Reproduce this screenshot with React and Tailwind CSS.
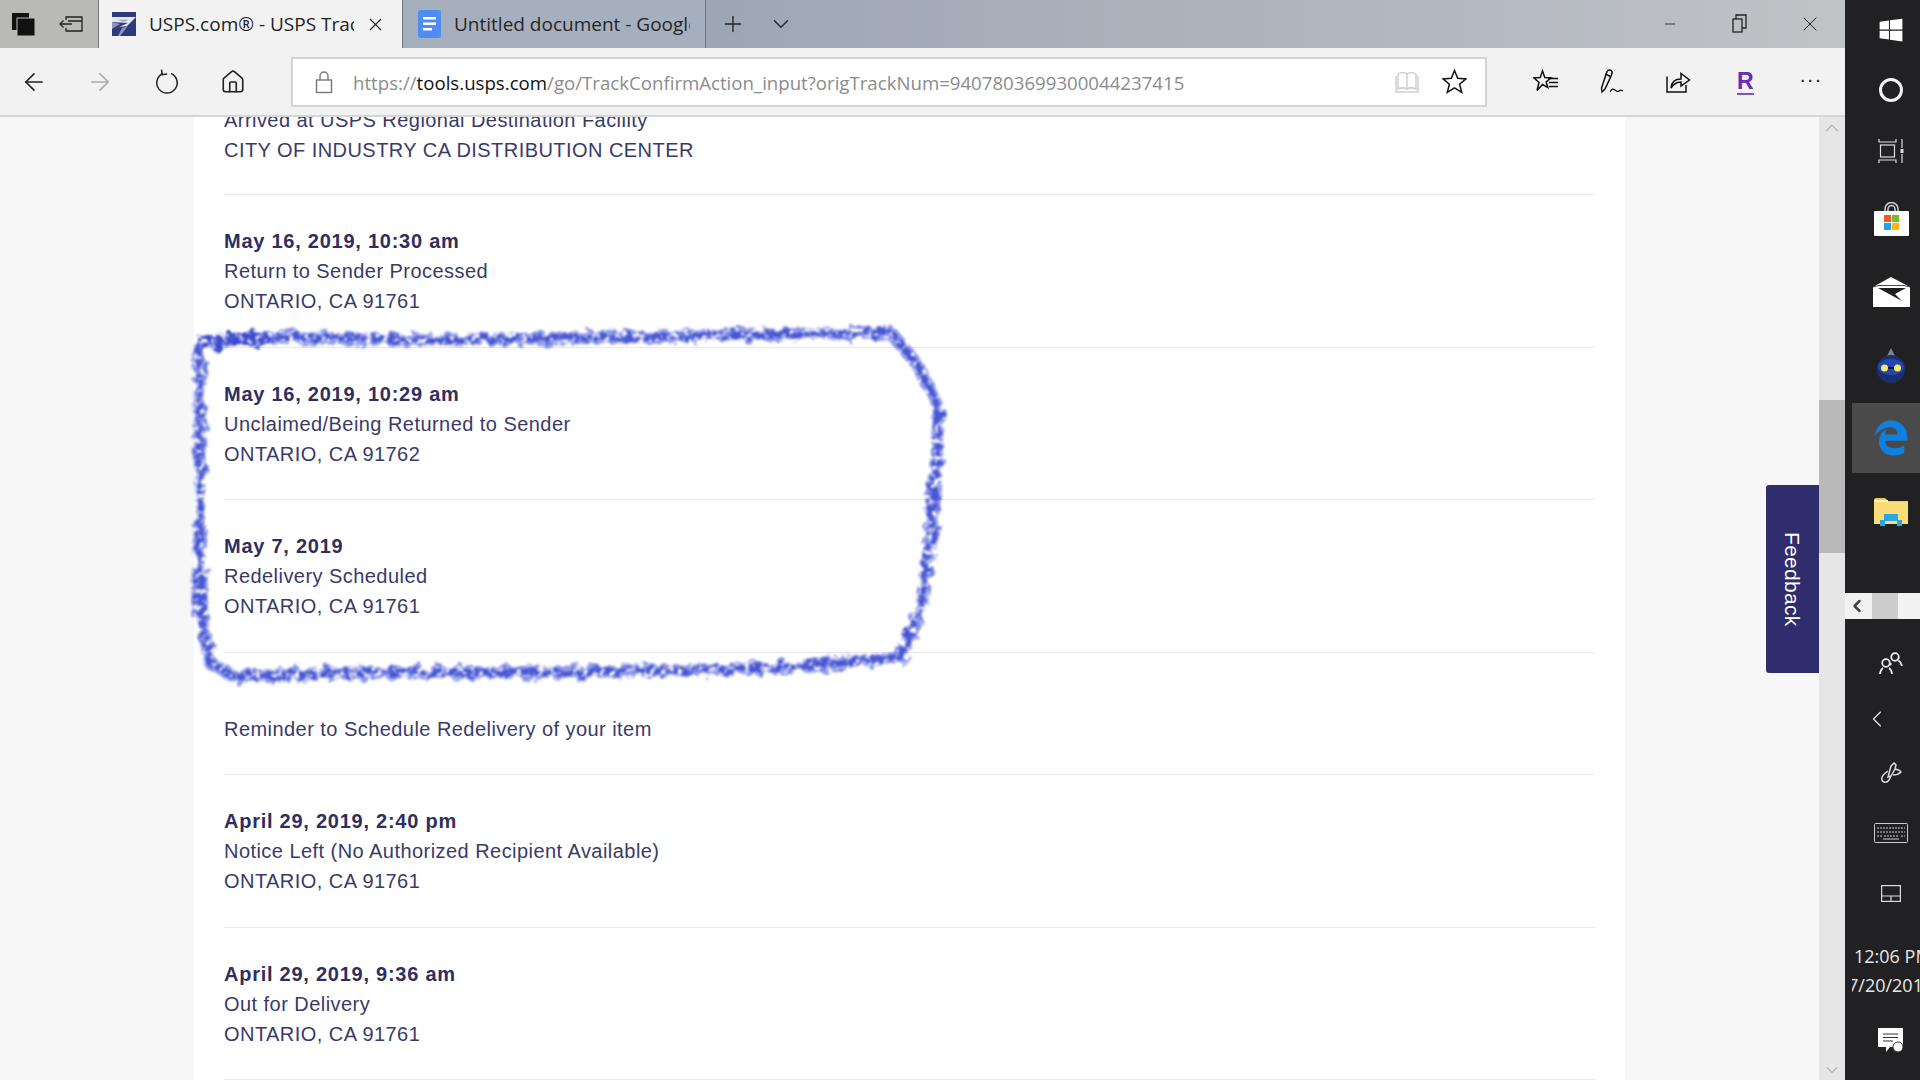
import React from 'react';
import { ArrowLeft, ArrowRight, House, X, Plus, ChevronDown, ChevronUp, ChevronLeft, Minus } from 'lucide-react';
import { FaWindows } from 'react-icons/fa';
import { FaEdgeLegacy } from 'react-icons/fa6';

const events = [
  { lines: ['Arrived at USPS Regional Destination Facility', 'CITY OF INDUSTRY CA DISTRIBUTION CENTER'], clipped: true },
  { date: 'May 16, 2019, 10:30 am', lines: ['Return to Sender Processed', 'ONTARIO, CA 91761'] },
  { date: 'May 16, 2019, 10:29 am', lines: ['Unclaimed/Being Returned to Sender', 'ONTARIO, CA 91762'] },
  { date: 'May 7, 2019', lines: ['Redelivery Scheduled', 'ONTARIO, CA 91761'] },
  { date: '', lines: ['Reminder to Schedule Redelivery of your item'] },
  { date: 'April 29, 2019, 2:40 pm', lines: ['Notice Left (No Authorized Recipient Available)', 'ONTARIO, CA 91761'] },
  { date: 'April 29, 2019, 9:36 am', lines: ['Out for Delivery', 'ONTARIO, CA 91761'] },
];

const Row = ({ event }) => (
  <div className={`border-b border-[#e9e9ec] ${event.clipped ? 'pb-[29px]' : 'pb-[30.500px] pt-[31px]'}`}>
    {!event.clipped && <div className="h-[30px] font-bold tracking-[0.750px] text-[#2f2f5f]">{event.date}</div>}
    {event.lines.map((line) => (
      <div key={line} className="h-[30px]">{line}</div>
    ))}
  </div>
);

const UspsLogo = () => (
  <svg width="24" height="24" viewBox="0 0 24 24">
    <rect width="24" height="24" fill="#2f3a78" />
    <path d="M0 5h24l-9 9-8 1 9-4-16-1z" fill="#e4e7f0" />
    <path d="M0 10l8 2-8 5zM16 14l-8 10h-2l4-8z" fill="#8d96ba" />
    <path d="M5 7.500h12l-5 3z" fill="#aeb5cf" />
  </svg>
);

const DocsIcon = () => (
  <svg width="23" height="28" viewBox="0 0 23 28">
    <rect width="23" height="28" rx="3" fill="#4d8df2" />
    <rect x="5" y="7" width="13" height="2.500" fill="#fff" />
    <rect x="5" y="12.500" width="13" height="2.500" fill="#fff" />
    <rect x="5" y="18" width="9" height="2.500" fill="#fff" />
  </svg>
);

const Refresh = () => (
  <svg width="26" height="28" viewBox="0 0 26 28" fill="none" stroke="#222" strokeWidth="1.500">
    <path d="M9 5.500a10.200 10.200 0 1 0 8 0" />
    <path d="M8 1.500v5h5" transform="rotate(-8 9 5)" />
  </svg>
);

const Lock = () => (
  <svg width="18" height="24" viewBox="0 0 18 24" fill="none" stroke="#777" strokeWidth="1.400">
    <rect x="1.500" y="10" width="15" height="12.500" />
    <path d="M5 10V6a4 4 0 0 1 8 0v4" />
  </svg>
);

const ReadingView = () => (
  <svg width="24" height="24" viewBox="0 0 24 24" fill="none" stroke="#cfcfcf" strokeWidth="1.500">
    <path d="M3 4c3-2 6-2 9 0 3-2 6-2 9 0v15c-3-1.500-6-1.500-9 0-3-1.500-6-1.500-9 0z" />
    <path d="M12 4v15M1 6v16h22V6" />
  </svg>
);

const StarIcon = () => (
  <svg width="25" height="25" viewBox="0 0 25 25" fill="none" stroke="#111" strokeWidth="1.500" strokeLinejoin="miter">
    <path d="M12.500 1.500l3.200 7.800 8.300.6-6.400 5.300 2.100 8.100-7.200-4.400-7.200 4.400 2.100-8.100L1 9.900l8.300-.6z" />
  </svg>
);

const FavList = () => (
  <svg width="26" height="26" viewBox="0 0 26 26" fill="none" stroke="#111" strokeWidth="1.500">
    <path d="M9.500 2l2.300 6.500 6.200.3-4.800 4.200 1.600 5.500L9.500 15.500 4 21.500l2-8L1 8.800l6.200-.3z" />
    <path d="M15 9.500h10M16 13.500h9M16 17.500h9" />
  </svg>
);

const PenIcon = () => (
  <svg width="26" height="28" viewBox="0 0 26 28" fill="none" stroke="#111" strokeWidth="1.500">
    <path d="M8 3.500c1-2 4-2 5 0 .5 1 0 2-.5 3.500L6 21l-3 3-.5-4z" />
    <path d="M6.500 6l5 2.500" />
    <path d="M11 24c2-3.500 3-3.500 5-2s3 2 4 1 2.500-1 4 0" strokeWidth="1.200" />
  </svg>
);

const ShareIcon = () => (
  <svg width="26" height="26" viewBox="0 0 26 26" fill="none" stroke="#111" strokeWidth="1.500">
    <path d="M2 7.500V23h19v-7" />
    <path d="M6 19c.5-6 4.500-9 10-9V4.500l8.500 6.500-8.500 6v-4c-4 0-7 1.500-10 6z" />
  </svg>
);

const RestoreIcon = () => (
  <svg width="16" height="20" viewBox="0 0 16 20" fill="none" stroke="#222" strokeWidth="1.300">
    <rect x="1" y="5" width="9" height="13" />
    <path d="M4 5V1h10v13h-4" />
  </svg>
);

const Cortana = () => (
  <div className="h-[24px] w-[24px] rounded-full border-[3px] border-[#f2f2f2]" />
);

const TaskView = () => (
  <svg width="26" height="26" viewBox="0 0 26 26" fill="none" stroke="#ddd" strokeWidth="1.200">
    <path d="M1 1v3h17V1M1 25v-3h17v3" />
    <rect x="2.500" y="7" width="14" height="12" />
    <path d="M24 1v9M24 16v9" />
    <rect x="22.500" y="11" width="3" height="4" fill="#ddd" stroke="none" />
  </svg>
);

const StoreIcon = () => (
  <svg width="35" height="34" viewBox="0 0 35 34">
    <path d="M11 9V7a6.500 6.500 0 0 1 13 0v2M14 9V7a3.500 3.500 0 0 1 7 0v2" fill="none" stroke="#cfcfcf" strokeWidth="1.500" />
    <rect y="9" width="35" height="25" rx="1" fill="#fff" />
    <rect x="10" y="13" width="7" height="7" fill="#ef5a28" />
    <rect x="18" y="13" width="7" height="7" fill="#7cb927" />
    <rect x="10" y="21" width="7" height="7" fill="#1ca5e8" />
    <rect x="18" y="21" width="7" height="7" fill="#fbb713" />
  </svg>
);

const MailIcon = () => (
  <svg width="37" height="30" viewBox="0 0 37 30">
    <path d="M0 10L18 0l19 10v20H0z" fill="#fff" />
    <path d="M5 11h28l-11 6 7 7z" fill="#1f1f22" />
    <path d="M0 10l6-1.500h25l6 1.500" fill="none" stroke="#1f1f22" strokeWidth="0.800" />
  </svg>
);

const BotIcon = () => (
  <svg width="30" height="36" viewBox="0 0 30 36">
    <path d="M15 0l6 12H9z" fill="#7d8794" />
    <circle cx="15" cy="21" r="14" fill="#1a2f70" />
    <ellipse cx="15" cy="19" rx="13" ry="8" fill="#2447b0" />
    <circle cx="8.500" cy="20" r="3.500" fill="#f4ee6a" />
    <circle cx="21.500" cy="20" r="3.500" fill="#f4ee6a" />
    <path d="M12 20h6" stroke="#10183c" strokeWidth="2" />
  </svg>
);

const FolderIcon = () => (
  <svg width="34" height="28" viewBox="0 0 34 28">
    <path d="M0 2a2 2 0 0 1 2-2h9l3 3h20v4H0z" fill="#f2c94c" />
    <rect y="4" width="34" height="22" fill="#fbdd78" />
    <rect x="0" y="2" width="14" height="2" fill="#fff2b8" />
    <path d="M6 28v-6h4v-4h14v4h4v6h-5v-5H11v5z" fill="#2aa7e0" />
    <rect x="10" y="16" width="14" height="3" fill="#2aa7e0" />
  </svg>
);

const PeopleIcon = () => (
  <svg width="24" height="24" viewBox="0 0 24 24" fill="none" stroke="#eee" strokeWidth="1.800">
    <circle cx="16" cy="5" r="3.800" />
    <path d="M12.500 11.500c-1 .5-1 1-1.500 1.500M19.500 8.500c1.500 1 3 3 3.500 5.500" />
    <circle cx="7" cy="11" r="3.800" />
    <path d="M1 22c.3-3 1.500-5 3-6M10 16c1.500 1 2.700 3 3 6" />
  </svg>
);

const PenSide = () => (
  <svg width="22" height="22" viewBox="0 0 22 22" fill="none" stroke="#ddd" strokeWidth="1.500">
    <path d="M11 4l3-3 2 2-1 4-4 7-3 1z" />
    <path d="M8 9c-3 2-7 6-6 9s5 3 7 0l2-4" />
    <path d="M15 7c3 1 5 1 6 3-2 2-5 3-8 3" />
  </svg>
);

const KeyboardIcon = () => (
  <svg width="34" height="20" viewBox="0 0 34 20" fill="none" stroke="#ccc">
    <rect x="0.500" y="0.500" width="33" height="19" rx="1" />
    <path d="M3 5h28M3 9h28M3 13h5M10 13h15M27 13h4" strokeDasharray="2 1" />
    <path d="M9 16h16" />
  </svg>
);

const TouchpadIcon = () => (
  <svg width="20" height="17" viewBox="0 0 20 17" fill="none" stroke="#ddd" strokeWidth="1.200">
    <rect x="0.600" y="0.600" width="18.800" height="15.800" />
    <path d="M0.600 11h18.800M10 11v5.400" />
  </svg>
);

const NotifIcon = () => (
  <svg width="26" height="26" viewBox="0 0 26 26">
    <path d="M0 1h25v19H12l-4 5v-5H0z" fill="#fff" />
    <path d="M5 7h15M5 10.500h15M5 14h10" stroke="#333" strokeWidth="1.200" />
    <circle cx="20" cy="20" r="5" fill="#fff" stroke="#333" />
  </svg>
);

const outline =
  'M200 345L255 337L429 340L628 337L891 333L916 363L939 407L936 470L931 530L921 610L901 657L777 668L578 672L329 673L235 677L210 663L200 610L200 477Z';

const Scribble = () => (
  <svg className="absolute inset-0 pointer-events-none" width="1920" height="1080" viewBox="0 0 1920 1080" fill="none">
    <defs>
      <filter id="rough" x="-5%" y="-5%" width="110%" height="110%">
        <feTurbulence type="fractalNoise" baseFrequency="0.09" numOctaves="3" seed="4" result="wob" />
        <feDisplacementMap in="SourceGraphic" in2="wob" scale="14" result="moved" />
        <feTurbulence type="fractalNoise" baseFrequency="0.18" numOctaves="2" seed="9" />
        <feColorMatrix values="0 0 0 0 0 0 0 0 0 0 0 0 0 0 0 2.600 2.600 0 0 -1.650" result="speck" />
        <feComposite in="moved" in2="speck" operator="in" />
        <feGaussianBlur stdDeviation="0.800" />
      </filter>
    </defs>
    <g filter="url(#rough)" strokeLinecap="round" strokeLinejoin="round">
      <path d={outline} stroke="#6a78e0" strokeOpacity="0.75" strokeWidth="13" />
      <path d={outline} stroke="#3f4fcf" strokeOpacity="0.9" strokeWidth="7" />
      <path d="M204 342L262 338" stroke="#3a49cc" strokeWidth="14" />
    </g>
  </svg>
);

const Cell = ({ className, children }) => (
  <div className={`flex items-center justify-center pl-[10px] ${className}`}>{children}</div>
);

export default function App() {
  return (
    <div className="relative flex h-screen w-full overflow-hidden bg-white font-['Liberation_Sans',sans-serif]">
      <div className="flex min-w-0 flex-1 flex-col">
        {/* tabs */}
        <div className="flex h-[48px] shrink-0 items-stretch bg-gradient-to-r from-[#8c97a7] via-[#a3acb8] to-[#c0c3c6] font-['Open_Sans',sans-serif] text-[#222]">
          <div className="flex w-[99px] items-center justify-center gap-[24px] border-r border-[#777] bg-[#b9b9b7] pr-1">
            <svg width="23" height="23" viewBox="0 0 23 23">
              <rect width="17" height="17" fill="#111" />
              <rect x="5" y="5" width="18" height="18" fill="#111" stroke="#b9b9b7" />
            </svg>
            <svg width="24" height="16" viewBox="0 0 24 16" fill="none" stroke="#222" strokeWidth="1.300">
              <path d="M7 4V1h16v14H7v-3" />
              <path d="M13 8H1M4.500 4.500L1 8l3.500 3.500M9 5h14" />
            </svg>
          </div>
          <div className="flex w-[303px] items-center bg-[#f2f2f2] pl-[13px] pr-[16px]">
            <UspsLogo />
            <span className="ml-[13px] w-[205px] overflow-hidden whitespace-nowrap text-[19px]">USPS.com® - USPS Tracking</span>
            <X size={21} strokeWidth={1.250} className="ml-auto" />
          </div>
          <div className="flex w-[304px] items-center border-x border-[#6f7885] bg-[#a6afbe] pl-[15px]">
            <DocsIcon />
            <span className="ml-[13px] w-[236px] overflow-hidden whitespace-nowrap text-[19px] text-[#262626]">Untitled document - Google Docs</span>
          </div>
          <div className="flex items-center gap-[22px] pl-[14px]">
            <Plus size={26} strokeWidth={1.250} />
            <ChevronDown size={26} strokeWidth={1.250} />
          </div>
          <div className="ml-auto flex items-center pr-[23px]">
            <Minus size={16} strokeWidth={1.250} />
            <div className="ml-[54px]"><RestoreIcon /></div>
            <div className="ml-[50px]"><X size={24} strokeWidth={1} /></div>
          </div>
        </div>

        {/* toolbar */}
        <div className="flex h-[69px] shrink-0 items-center border-b-2 border-[#d6d6d6] bg-[#f2f2f2] pl-[20px]">
          <div className="flex w-[271px] items-center">
            <ArrowLeft size={28} strokeWidth={1.400} color="#222" />
            <ArrowRight size={28} strokeWidth={1.400} color="#aaa" className="ml-[38px]" />
            <div className="ml-[40px]"><Refresh /></div>
            <House size={26} strokeWidth={1.500} color="#222" className="ml-[40px]" />
          </div>
          <div className="flex h-[50px] w-[1196px] items-center border-2 border-[#d4d4d4] bg-white pl-[22px] pr-[18px] font-['Open_Sans',sans-serif] text-[18.650px] text-[#8c8c8c]">
            <Lock />
            <span className="ml-[20px] mt-[3px] whitespace-nowrap">
              https://<span className="text-[#111]">tools.usps.com</span>/go/TrackConfirmAction_input?origTrackNum=9407803699300044237415
            </span>
            <div className="ml-auto flex items-center gap-[23px]">
              <ReadingView />
              <StarIcon />
            </div>
          </div>
          <div className="flex flex-1 items-center pl-[46px]">
            <FavList />
            <div className="ml-[40px]"><PenIcon /></div>
            <div className="ml-[40px]"><ShareIcon /></div>
            <span className="ml-[46px] border-b-2 border-[#7f52c9] text-[23px] font-bold leading-[24px] text-[#6a2bb8]">R</span>
            <span className="ml-[47px] text-[14px] font-bold tracking-[3px] text-[#222]">···</span>
          </div>
        </div>

        {/* page */}
        <div className="relative flex min-h-0 flex-1 overflow-hidden bg-[#f7f7f7]">
          <div className="ml-[194px] mt-[-12px] h-fit w-[1431px] shrink-0 bg-white px-[30px] text-[20px] leading-[30px] tracking-[0.450px] text-[#3a3a68]">
            {events.map((event, i) => (
              <Row key={i} event={event} />
            ))}
          </div>
          <div className="absolute right-[26px] top-[368px] flex h-[188px] w-[53px] items-center justify-center rounded-l-[3px] bg-[#2f2d6e] text-[21px] tracking-[0.300px] text-white [writing-mode:vertical-rl]">
            Feedback
          </div>
          <div className="ml-auto flex w-[26px] shrink-0 flex-col bg-[#e6e6e6] text-[#888]">
            <ChevronUp size={26} strokeWidth={1} className="h-[22px]" />
            <div className="mt-[261px] h-[153px] bg-[#b9b9b9]" />
            <div className="flex-1" />
            <ChevronDown size={26} strokeWidth={1} className="h-[20px]" />
          </div>
        </div>
      </div>

      {/* windows tablet taskbar */}
      <div className="flex w-[75px] shrink-0 flex-col bg-[#212124] pl-[7px] text-[#e8e8e8]">
        <Cell className="h-[60px]"><FaWindows size={26} color="#fff" /></Cell>
        <Cell className="h-[60px]"><Cortana /></Cell>
        <Cell className="h-[62px]"><TaskView /></Cell>
        <Cell className="h-[74px]"><StoreIcon /></Cell>
        <Cell className="h-[72px]"><MailIcon /></Cell>
        <Cell className="h-[75px]"><BotIcon /></Cell>
        <Cell className="h-[70px] bg-[#4a4a4a]"><FaEdgeLegacy size={36} color="#0f7fe0" /></Cell>
        <Cell className="h-[78px]"><FolderIcon /></Cell>
        <div className="-ml-[7px] mt-[42px] flex h-[26px] items-center bg-[#f2f2f2]">
          <ChevronLeft size={20} strokeWidth={3} color="#444" className="ml-[2px]" />
          <div className="ml-[5px] h-full w-[26px] bg-[#cccccc]" />
        </div>
        <Cell className="mt-[14px] h-[62px]"><PeopleIcon /></Cell>
        <div className="flex h-[48px] items-center pl-[11px]"><ChevronLeft size={28} strokeWidth={1} /></div>
        <Cell className="h-[60px]"><PenSide /></Cell>
        <Cell className="h-[60px]"><KeyboardIcon /></Cell>
        <Cell className="h-[60px]"><TouchpadIcon /></Cell>
        <div className="mt-[19px] overflow-hidden whitespace-nowrap font-['Open_Sans',sans-serif] text-[18px] leading-[29px]">
          <div className="pl-[2px]">12:06 PM</div>
          <div className="ml-[-4px]">7/20/2019</div>
        </div>
        <Cell className="mt-[20px] h-[40px]"><NotifIcon /></Cell>
      </div>

      <Scribble />
    </div>
  );
}
